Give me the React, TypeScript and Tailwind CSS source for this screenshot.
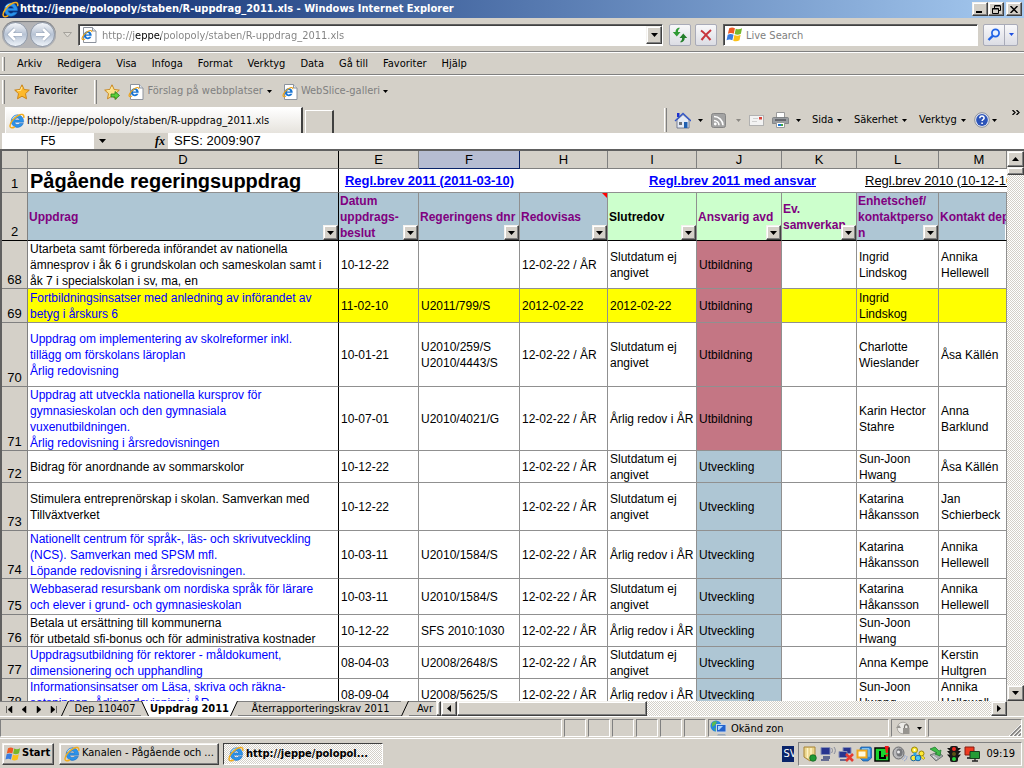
import React from "react";

const BEVEL =
  "border border-t-[#f4f2ee] border-l-[#f4f2ee] border-r-[#404040] border-b-[#404040] bg-[#d4d0c8] shadow-[inset_-1px_-1px_0_#808080,inset_1px_1px_0_#ffffff]";
const SUNKEN = "border border-t-[#808080] border-l-[#808080] border-r-white border-b-white";
const DITHER = "bg-[repeating-conic-gradient(#ffffff_0_25%,#d4d0c8_0_50%)] bg-[length:2px_2px]";

function IeIcon({ size = 16 }: { size?: number }) {
  return (
    <svg width={size} height={size} viewBox="0 0 16 16" aria-hidden="true" className="shrink-0">
      <path
        d="M8.300 1.800a6.300 6.300 0 1 0 6 8.700h-3.600a2.900 2.900 0 0 1-5.100-1.300h9c.3-4.200-2.500-7.400-6.300-7.400zM5.800 6.900a2.600 2.600 0 0 1 5 0z"
        fill="#2b93ea"
        stroke="#1463bb"
        strokeWidth=".5"
      />
      <path d="M3.600 6C4.600 3.900 6.500 2.900 8.500 2.900" fill="none" stroke="#a5dcff" strokeWidth="1.300" />
      <path
        d="M14.800 4.300C15.300 1 12.600.600 9 2.600 4.600 5 .8 10.200 1 13.200c.2 2 2.400 1.900 4.400.8"
        fill="none"
        stroke="#f2ac1c"
        strokeWidth="1.500"
        strokeLinecap="round"
      />
    </svg>
  );
}

function IePage() {
  return (
    <svg width="16" height="16" viewBox="0 0 16 16" aria-hidden="true" className="shrink-0">
      <path d="M2.500.500h9l3.500 3.500v11.500H2.500z" fill="#fff" stroke="#8c929c" />
      <path d="M11.500.500V4H15" fill="#dfe6ee" stroke="#8c929c" />
      <path d="M6.700 4.200a4 4 0 1 0 3.800 5.600H8.200a1.800 1.800 0 0 1-3.200-1h5.700c.2-2.700-1.500-4.600-4-4.600zM5 7.400a1.700 1.700 0 0 1 3.300 0z" fill="#1773d2" />
      <path d="M10.800 5.200c.3-2-1.500-2.200-4-.8C3.800 6.200.9 9.800 1 11.700c.2 1.300 1.600 1.100 3 .3" fill="none" stroke="#eda41a" strokeWidth="1.200" />
    </svg>
  );
}

function Flag({ size = 16 }: { size?: number }) {
  return (
    <svg width={size} height={size} viewBox="0 0 16 16" aria-hidden="true" className="shrink-0">
      <path d="M3 2.200c2-1 3.600-1 5.400 0L7.300 7.400c-1.900-1-3.500-1-5.500 0z" fill="#ee5a24" />
      <path d="M9.200 2.500c1.900.9 3.700.9 5.900-.3L14 7.300c-2.100 1.100-3.900 1.200-5.900.3z" fill="#76b82a" />
      <path d="M1.600 8.300c2-1 3.600-1 5.500 0L6 13.500c-1.900-1-3.600-1-5.500 0z" fill="#3a7de0" />
      <path d="M7.900 8.500c1.900.9 3.800.9 5.900-.3l-1.100 5.300c-2.100 1.100-4 1.200-5.900.3z" fill="#fbc117" />
    </svg>
  );
}

function Star({ add = false }: { add?: boolean }) {
  return (
    <svg width="16" height="16" viewBox="0 0 16 16" aria-hidden="true" className="shrink-0">
      <path
        d="M8 .8l2.200 4.700 5.100.6-3.800 3.500 1 5.200L8 12.200l-4.500 2.600 1-5.200L.7 6.100l5.100-.6z"
        fill={add ? "#fbe08a" : "#fdb92b"}
        stroke="#c77f10"
        strokeWidth=".9"
        strokeLinejoin="round"
      />
      <path d="M8 3l-1.400 3.300-3.400.500" fill="none" stroke="#ffe79a" strokeWidth="1.100" />
      {add && <path d="M7 10h4V7.500l4.500 4-4.500 4V13H7z" fill="#5cd03a" stroke="#237a16" strokeWidth=".8" />}
    </svg>
  );
}

function Caret({ className = "text-black" }: { className?: string }) {
  return (
    <svg width="5" height="3" viewBox="0 0 5 3" aria-hidden="true" className={`shrink-0 ${className}`}>
      <path d="M0 0h5L2.500 3z" fill="currentColor" />
    </svg>
  );
}

function Grip() {
  return <span className="h-6 w-[3px] shrink-0 border-l border-l-white border-r border-r-[#808080]" />;
}

function TitleBar() {
  return (
    <header className="flex h-[18px] shrink-0 items-center bg-linear-to-r from-[#0a246a] to-[#a6caf0] pl-[2px] pr-[2px]">
      <IeIcon size={17} />
      <h1 className="ml-[1px] flex-1 truncate text-[11px] font-bold leading-4 text-white">
        http://jeppe/polopoly/staben/R-uppdrag_2011.xls - Windows Internet Explorer
      </h1>
      <button aria-label="Minimera" className={`flex h-[14px] w-4 items-end justify-center pb-[2px] ${BEVEL}`}>
        <span className="mr-[2px] h-[2px] w-[6px] bg-black" />
      </button>
      <button aria-label="Återställ" className={`flex h-[14px] w-4 items-center justify-center ${BEVEL}`}>
        <svg width="9" height="9" viewBox="0 0 9 9">
          <path d="M2.500 3V1h6v4.500H6.500M2.500.500h6M.500 3.500h6v5h-6zM.500 4h6" fill="none" stroke="#000" />
        </svg>
      </button>
      <button aria-label="Stäng" className={`ml-[2px] flex h-[14px] w-4 items-center justify-center ${BEVEL}`}>
        <svg width="8" height="7" viewBox="0 0 8 7">
          <path d="M.500 0l7 7M7.500 0l-7 7" stroke="#000" strokeWidth="1.500" />
        </svg>
      </button>
    </header>
  );
}

function NavBar() {
  return (
    <div className="flex h-[34px] shrink-0 items-center border-b border-b-[#808080] pl-[2px] pr-[6px]">
      <div className="flex items-center gap-[2px] rounded-full bg-[#b4b4b6] p-[1px] shadow-[inset_0_1px_1px_#77797d]">
        {["Bakåt", "Framåt"].map((label, i) => (
          <button
            key={label}
            aria-label={label}
            className="flex size-[25px] items-center justify-center rounded-full border border-[#8f99a8] bg-linear-to-b from-[#f4f6fa] via-[#b7c3d4] to-[#eef3f9]"
          >
            <svg width="17" height="15" viewBox="0 0 17 15">
              <path
                d={i === 0 ? "M8 2L2.500 7.500 8 13M3 7.500h12" : "M9 2l5.500 5.500L9 13M14 7.500H2"}
                fill="none"
                stroke="#98a6ba"
                strokeWidth="4"
              />
              <path
                d={i === 0 ? "M8 2L2.500 7.500 8 13M3 7.500h12" : "M9 2l5.500 5.500L9 13M14 7.500H2"}
                fill="none"
                stroke="#fff"
                strokeWidth="2.800"
              />
            </svg>
          </button>
        ))}
      </div>
      <button aria-label="Senaste sidor" className="flex w-[22px] items-center justify-center">
        <svg width="9" height="6" viewBox="0 0 9 6">
          <path d="M.500.500h8l-4 4.500z" fill="#dedbd4" stroke="#a5a29c" />
        </svg>
      </button>
      <div className="flex h-[22px] flex-1 items-center border border-t-[#606060] border-l-[#606060] border-r-white border-b-white bg-white pl-[2px] shadow-[inset_1px_1px_0_#404040]">
        <IePage />
        <input
          aria-label="Adress"
          defaultValue="http://jeppe/polopoly/staben/R-uppdrag_2011.xls"
          className="ml-[5px] h-[18px] min-w-0 flex-1 bg-[linear-gradient(90deg,#808080_32px,#000000_32px,#000000_59px,#808080_59px)] bg-clip-text pt-[2px] text-[11px] leading-4 text-transparent outline-none"
        />
        <button aria-label="Visa adresser" className={`flex h-[18px] w-4 items-center justify-center ${BEVEL}`}>
          <svg width="7" height="4" viewBox="0 0 7 4">
            <path d="M0 0h7L3.500 4z" />
          </svg>
        </button>
      </div>
      <button
        aria-label="Uppdatera"
        className="ml-[6px] flex size-[22px] items-center justify-center rounded-[2px] border border-[#a9abb8] bg-linear-to-b from-[#f8f8fa] to-[#dcdde4]"
      >
        <svg width="16" height="16" viewBox="0 0 16 16">
          <path d="M7.500.500C5 .8 3.500 2.500 3.500 5H.800l4 4.500L8.500 5H6c0-1.700.4-2.600 1.500-3.200z" fill="#2f9a35" />
          <path d="M8.500 15.500c2.700-.3 4.200-2 4.200-4.500h2.500l-3.900-4.500L7.500 11h2.600c0 1.700-.5 2.600-1.600 3.200z" fill="#237f2a" />
        </svg>
      </button>
      <button
        aria-label="Stoppa"
        className="ml-1 flex size-[22px] items-center justify-center rounded-[2px] border border-[#a9abb8] bg-linear-to-b from-[#f8f8fa] to-[#dcdde4]"
      >
        <svg width="12" height="12" viewBox="0 0 12 12">
          <path d="M1 1.500c3 2 6 5.500 9.500 9.500M11 1C7.500 4 4.500 7 1.500 11" fill="none" stroke="#c8343c" strokeWidth="2.100" />
        </svg>
      </button>
      <div className="ml-[6px] flex h-[22px] w-[255px] items-center border border-t-[#606060] border-l-[#606060] border-r-white border-b-white bg-white pl-[2px] shadow-[inset_1px_1px_0_#404040]">
        <Flag size={17} />
        <input
          aria-label="Sök"
          placeholder="Live Search"
          className="ml-[3px] h-[18px] min-w-0 flex-1 pt-[2px] text-[11px] leading-4 outline-none placeholder:text-[#808080]"
        />
      </div>
      <div className="ml-[5px] flex h-[22px] rounded-[2px] border border-[#a9abb8] bg-linear-to-b from-[#f8f8fa] to-[#dcdde4]">
        <button aria-label="Sök på webben" className="flex w-[21px] items-center justify-center border-r border-[#a9abb8]">
          <svg width="14" height="14" viewBox="0 0 14 14">
            <circle cx="8.500" cy="5" r="3.600" fill="#e6f0ff" stroke="#1f62e6" strokeWidth="1.700" />
            <path d="M5.700 7.800L1.500 12" stroke="#1f62e6" strokeWidth="2.400" />
          </svg>
        </button>
        <button aria-label="Sökalternativ" className="flex w-3 items-center justify-center">
          <Caret className="text-[#1f4fe0]" />
        </button>
      </div>
    </div>
  );
}

function MenuBar() {
  const items = ["Arkiv", "Redigera", "Visa", "Infoga", "Format", "Verktyg", "Data", "Gå till", "Favoriter", "Hjälp"];
  return (
    <nav className="flex h-[23px] shrink-0 items-center border-t border-b border-t-white border-b-[#808080] pl-[2px]">
      <span className="h-[14px] w-[3px] border-l border-l-white border-r border-r-[#808080]" />
      <div className="ml-3 flex gap-[15px] pt-[1px]">
        {items.map((t) => (
          <button key={t} className="text-[11px] leading-4">
            {t}
          </button>
        ))}
      </div>
    </nav>
  );
}

function FavoritesBar() {
  return (
    <div className="flex h-8 shrink-0 items-center border-t border-t-white pl-[2px] text-[11px]">
      <Grip />
      <button className="ml-[9px] flex items-center gap-1">
        <Star />
        Favoriter
      </button>
      <span className="w-[16px]" />
      <Grip />
      <button aria-label="Lägg till i Favoriter" className="ml-[7px]">
        <Star add />
      </button>
      <button className="ml-2 flex items-center gap-1 text-[#808080]">
        <IePage />
        Förslag på webbplatser
        <Caret className="text-black" />
      </button>
      <button className="ml-[10px] flex items-center gap-[3px] text-[#808080]">
        <IePage />
        WebSlice-galleri
        <Caret className="text-black" />
      </button>
    </div>
  );
}

function TabRow() {
  return (
    <div className="flex h-[26px] shrink-0 items-end text-[11px]">
      <button className="ml-[5px] flex h-[26px] w-[298px] items-center border-t border-l border-t-white border-l-white border-r-2 border-r-[#404040] bg-linear-to-b from-white to-[#e6e3dd] pl-[3px]">
        <IeIcon />
        <span className="ml-[2px] pt-[2px]">http://jeppe/polopoly/staben/R-uppdrag_2011.xls</span>
      </button>
      <button
        aria-label="Ny flik"
        className="ml-[2px] h-[23px] w-[29px] border-t border-l border-t-white border-l-white border-r-2 border-r-[#404040]"
      />
      <div className="ml-auto flex h-[26px] items-center">
        <Grip />
        <button aria-label="Startsida" className="ml-[7px] flex w-[37px] items-center justify-between pr-2">
          <svg width="17" height="17" viewBox="0 0 17 17">
            <path d="M3 1h2.500v4H3z" fill="#1c2fd0" />
            <path d="M3 8l6-5.500L15 8v8H3z" fill="#e4eaf5" stroke="#5b6680" strokeWidth=".8" />
            <path d="M1 9l8-7.500L17 9" fill="none" stroke="#3558c8" strokeWidth="1.400" />
            <path d="M10 10h3.500v6H10z" fill="#1f5fb0" />
            <path d="M5 10h3v3H5z" fill="#6b7079" />
          </svg>
          <Caret />
        </button>
        <button aria-label="Flöden" className="flex w-[38px] items-center justify-between pr-2">
          <svg width="15" height="15" viewBox="0 0 15 15">
            <rect x=".500" y=".500" width="14" height="14" rx="2" fill="#a3a3a3" stroke="#858585" />
            <path d="M3 7.500a5 5 0 0 1 5 4.800M3 3.500a9 9 0 0 1 9 8.800" fill="none" stroke="#fff" strokeWidth="1.600" />
            <circle cx="4.300" cy="11" r="1.400" fill="#fff" />
          </svg>
          <Caret className="text-[#8c8984]" />
        </button>
        <button aria-label="Läs e-post" className="w-[23px]">
          <svg width="15" height="11" viewBox="0 0 15 11">
            <rect x=".500" y=".500" width="14" height="10" fill="#f3f3f3" stroke="#b1b1b1" />
            <path d="M10 2h3v2.500h-3z" fill="#d8433a" />
            <path d="M4 3.500h5M3 6.500h5" stroke="#d0d0d0" />
          </svg>
        </button>
        <button aria-label="Skriv ut" className="flex w-10 items-center justify-between pr-[11px]">
          <svg width="17" height="16" viewBox="0 0 17 16">
            <path d="M4.500.500h8V6h-8z" fill="#fff" stroke="#9a9a9a" />
            <path d="M1.500 5.500h14q1 0 1 1v5h-16v-5q0-1 1-1z" fill="#9b9ea2" stroke="#6f7276" strokeWidth=".7" />
            <path d="M3 8h11" stroke="#55575c" strokeWidth="1.500" />
            <path d="M4.500 10.500h8v5h-8z" fill="#fff" stroke="#9a9a9a" />
            <path d="M6 12h3v2H6z" fill="#1b73d1" />
            <path d="M9 12h2v2H9z" fill="#3da843" />
          </svg>
          <Caret />
        </button>
        <button className="flex w-[42px] items-center gap-1">
          Sida <Caret />
        </button>
        <button className="flex w-[65px] items-center gap-1">
          Säkerhet <Caret />
        </button>
        <button className="flex w-[55px] items-center gap-1">
          Verktyg <Caret />
        </button>
        <button aria-label="Hjälp" className="flex items-center gap-[2px]">
          <svg width="16" height="16" viewBox="0 0 16 16">
            <circle cx="8" cy="8" r="7.300" fill="#e9edf5" stroke="#8a8f9b" />
            <circle cx="8" cy="8" r="5.900" fill="#2b53b8" />
            <path d="M5.800 6.300c.1-3 4.500-2.800 4.300-.2-.1 1.400-2 1.400-2 3" fill="none" stroke="#fff" strokeWidth="1.500" />
            <path d="M7.300 10.500h1.600V12H7.300z" fill="#fff" />
          </svg>
          <Caret />
        </button>
        <button aria-label="Fler kommandon" className="ml-[15px] mr-1 mb-4">
          <svg width="8" height="5" viewBox="0 0 8 5">
            <path d="M.500 0L3 2.500.500 5M4.500 0L7 2.500 4.500 5" fill="none" stroke="#000" strokeWidth="1.300" />
          </svg>
        </button>
      </div>
    </div>
  );
}

function FormulaBar() {
  return (
    <div className="flex h-4 shrink-0 items-stretch font-['Liberation_Sans',Arial,sans-serif] text-[13px] leading-4">
      <input aria-label="Namnruta" defaultValue="F5" className="ml-[2px] h-4 w-[92px] bg-white text-center outline-none" />
      <button aria-label="Visa namn" className="flex w-[17px] items-center justify-center">
        <svg width="7" height="4" viewBox="0 0 7 4">
          <path d="M0 0h7L3.500 4z" />
        </svg>
      </button>
      <button
        aria-label="Infoga funktion"
        className="ml-[41px] w-4 text-center font-['Liberation_Serif',serif] text-[12px] font-bold italic leading-4"
      >
        fx
      </button>
      <input
        aria-label="Formel"
        defaultValue="SFS: 2009:907"
        className="h-4 min-w-0 flex-1 bg-white pl-[6px] outline-none"
      />
    </div>
  );
}

function FilterButton({ column }: { column: string }) {
  return (
    <button
      aria-label={`Filtrera ${column}`}
      className={`absolute right-0 bottom-0 flex h-[15px] w-[15px] items-center justify-center ${BEVEL}`}
    >
      <svg width="7" height="4" viewBox="0 0 7 4">
        <path d="M0 0h7L3.500 4z" />
      </svg>
    </button>
  );
}

const BLUE_HEAD = "bg-[#aec6d4] text-[#800080]";
const GREEN_HEAD = "bg-[#ccffcc]";

const FIELDS = [
  { id: "D", text: "Uppdrag", tone: BLUE_HEAD },
  { id: "E", text: "Datum\nuppdrags-\nbeslut", tone: BLUE_HEAD },
  { id: "F", text: "Regeringens dnr", tone: BLUE_HEAD },
  { id: "H", text: "Redovisas", tone: BLUE_HEAD },
  { id: "I", text: "Slutredov", tone: `${GREEN_HEAD} text-black` },
  { id: "J", text: "Ansvarig avd", tone: `${GREEN_HEAD} text-[#800080]` },
  { id: "K", text: "Ev.\nsamverkan", tone: `${GREEN_HEAD} text-[#800080]` },
  { id: "L", text: "Enhetschef/\nkontaktperso\nn", tone: BLUE_HEAD },
  { id: "M", text: "Kontakt dep", tone: BLUE_HEAD },
];

type Row = {
  n: number;
  h: string;
  cells: string[];
  blue?: boolean;
  yellow?: boolean;
};

const AR = "12-02-22 / ÅR";
const OPEN = "Slutdatum ej\nangivet";
const YEARLY = "Årlig redov i ÅR";

const ROWS: Row[] = [
  { n: 68, h: "h-[47px]", cells: ["Utarbeta samt förbereda införandet av nationella\nämnesprov i åk 6 i grundskolan och sameskolan samt i\nåk 7 i specialskolan i sv, ma, en", "10-12-22", "", AR, OPEN, "Utbildning", "", "Ingrid\nLindskog", "Annika\nHellewell"] },
  { n: 69, h: "h-[33px]", blue: true, yellow: true, cells: ["Fortbildningsinsatser med anledning av införandet av\nbetyg i årskurs 6", "11-02-10", "U2011/799/S", "2012-02-22", "2012-02-22", "Utbildning", "", "Ingrid\nLindskog", ""] },
  { n: 70, h: "h-[63px]", blue: true, cells: ["Uppdrag om implementering av skolreformer inkl.\ntillägg om förskolans läroplan\nÅrlig redovisning", "10-01-21", "U2010/259/S\nU2010/4443/S", AR, OPEN, "Utbildning", "", "Charlotte\nWieslander", "Åsa Källén"] },
  { n: 71, h: "h-[63px]", blue: true, cells: ["Uppdrag att utveckla nationella kursprov för\ngymnasieskolan och den gymnasiala\nvuxenutbildningen.\nÅrlig redovisning i årsredovisningen", "10-07-01", "U2010/4021/G", AR, YEARLY, "Utbildning", "", "Karin Hector\nStahre", "Anna\nBarklund"] },
  { n: 72, h: "h-[31px]", cells: ["Bidrag för anordnande av sommarskolor", "10-12-22", "", AR, OPEN, "Utveckling", "", "Sun-Joon\nHwang", "Åsa Källén"] },
  { n: 73, h: "h-[47px]", cells: ["Stimulera entreprenörskap i skolan. Samverkan med\nTillväxtverket", "10-12-22", "", AR, OPEN, "Utveckling", "", "Katarina\nHåkansson", "Jan\nSchierbeck"] },
  { n: 74, h: "h-[47px]", blue: true, cells: ["Nationellt centrum för språk-, läs- och skrivutveckling\n(NCS). Samverkan med SPSM mfl.\nLöpande redovisning i årsredovisningen.", "10-03-11", "U2010/1584/S", AR, YEARLY, "Utveckling", "", "Katarina\nHåkansson", "Annika\nHellewell"] },
  { n: 75, h: "h-[35px]", blue: true, cells: ["Webbaserad resursbank om nordiska språk för lärare\noch elever i grund- och gymnasieskolan", "10-03-11", "U2010/1584/S", AR, OPEN, "Utveckling", "", "Katarina\nHåkansson", "Annika\nHellewell"] },
  { n: 76, h: "h-[31px]", cells: ["Betala ut ersättning till kommunerna\nför utbetald sfi-bonus och för administrativa kostnader", "10-12-22", "SFS 2010:1030", AR, YEARLY, "Utveckling", "", "Sun-Joon\nHwang", ""] },
  { n: 77, h: "h-[31px]", blue: true, cells: ["Uppdragsutbildning för rektorer - måldokument,\ndimensionering och upphandling", "08-04-03", "U2008/2648/S", AR, OPEN, "Utveckling", "", "Anna Kempe", "Kerstin\nHultgren"] },
  { n: 78, h: "h-[31px]", blue: true, cells: ["Informationsinsatser om Läsa, skriva och räkna-\nsatsningen. Årlig redovisning i ÅR.", "08-09-04", "U2008/5625/S", AR, YEARLY, "Utveckling", "", "Sun-Joon\nHwang", "Annika\nHellewell"] },
];

function cellTone(row: Row, i: number) {
  if (i === 5) return row.cells[5] === "Utbildning" ? "bg-[#c47684]" : "bg-[#aec6d4]";
  return row.yellow ? "bg-[#ffff00]" : "bg-white";
}

const LINE = "border-r border-b border-[#909090]";
const HEAD = "border-r border-b border-[#808080] bg-[#d4d0c8] p-0 text-[13px] font-normal";

function Sheet() {
  return (
    <div className="min-w-0 flex-1 overflow-hidden">
      <table className="w-full table-fixed border-separate border-spacing-0 font-['Liberation_Sans',Arial,sans-serif] text-[12px] leading-4">
        <colgroup>
          <col className="w-[26px]" />
          <col className="w-[311px]" />
          <col className="w-[80px]" />
          <col className="w-[101px]" />
          <col className="w-[88px]" />
          <col className="w-[89px]" />
          <col className="w-[85px]" />
          <col className="w-[75px]" />
          <col className="w-[82px]" />
          <col />
        </colgroup>
        <thead>
          <tr>
            <th className={HEAD} aria-label="Markera allt" />
            {FIELDS.map((f) => (
              <th
                key={f.id}
                className={`${HEAD} ${f.id === "F" ? "border-r-[#0a246a]! border-b-[#0a246a]! bg-[#b6bdd2]!" : ""} ${f.id === "D" ? "border-r-black!" : ""}`}
              >
                <div className={`h-[17px] leading-[18px] ${f.id === "M" ? "pl-[13px]" : ""}`}>{f.id}</div>
              </th>
            ))}
          </tr>
        </thead>
        <tbody>
          <tr>
            <th className={`${HEAD} align-bottom`}>1</th>
            <td className="border-r border-b border-r-black border-b-[#909090] bg-white p-0 pl-[2px]">
              <div className="flex h-[23px] items-center whitespace-nowrap text-[20px] font-bold">Pågående regeringsuppdrag</div>
            </td>
            <td colSpan={2} className="border-b border-[#909090] bg-white p-0 text-center text-[13px] font-bold">
              <a href="#2011" className="text-[#0000ff] underline">
                Regl.brev 2011 (2011-03-10)
              </a>
            </td>
            <td className="border-b border-[#909090] bg-white p-0" />
            <td colSpan={3} className="border-b border-[#909090] bg-white p-0 text-center text-[13px] font-bold">
              <a href="#ansvar" className="text-[#0000ff] underline">
                Regl.brev 2011 med ansvar
              </a>
            </td>
            <td colSpan={2} className="overflow-hidden border-b border-[#909090] bg-white p-0 pl-2 text-[13px] whitespace-nowrap">
              <a href="#2010" className="underline">
                Regl.brev 2010 (10-12-16)
              </a>
            </td>
          </tr>
          <tr>
            <th className={`${HEAD} border-b-black! align-bottom`}>2</th>
            {FIELDS.map((f) => (
              <td
                key={f.id}
                className={`border-r border-b border-b-black p-0 font-bold ${f.id === "D" ? "border-r-black" : "border-r-[#909090]"} ${f.tone}`}
              >
                <div className="relative flex h-[47px] items-center overflow-hidden pl-[1px] whitespace-pre">
                  {f.text}
                  {f.id !== "M" && <FilterButton column={f.id} />}
                  {f.id === "M" && <span className="absolute right-0 bottom-0 h-[15px] w-px bg-white" />}
                  {f.id === "H" && (
                    <svg width="5" height="5" viewBox="0 0 5 5" className="absolute top-0 right-0">
                      <path d="M0 0h5v5z" fill="#f00" />
                    </svg>
                  )}
                </div>
              </td>
            ))}
          </tr>
          {ROWS.map((row) => (
            <tr key={row.n}>
              <th className={`${HEAD} align-bottom`}>{row.n}</th>
              {row.cells.map((text, i) => (
                <td
                  key={i}
                  className={`${LINE} p-0 ${i === 0 ? "border-r-black!" : ""} ${cellTone(row, i)} ${row.blue && i === 0 ? "text-[#0000ff]" : "text-black"}`}
                >
                  <div className={`flex items-center overflow-hidden pl-[2px] whitespace-pre ${row.h}`}>{text}</div>
                </td>
              ))}
            </tr>
          ))}
        </tbody>
      </table>
    </div>
  );
}

function VerticalScroll() {
  return (
    <div className={`flex w-[17px] shrink-0 flex-col ${DITHER}`}>
      <button aria-label="Rulla upp" className={`flex h-4 items-center justify-center ${BEVEL}`}>
        <svg width="7" height="4" viewBox="0 0 7 4">
          <path d="M0 4h7L3.500 0z" />
        </svg>
      </button>
      <span className={`h-2 ${BEVEL}`} />
      <button aria-label="Rulla ned" className={`mt-auto flex h-4 items-center justify-center ${BEVEL}`}>
        <svg width="7" height="4" viewBox="0 0 7 4">
          <path d="M0 0h7L3.500 4z" />
        </svg>
      </button>
    </div>
  );
}

function Slant({ back = false, left, right }: { back?: boolean; left: string; right: string }) {
  const d = back ? "M.500 0l7 15" : "M7.500 0L.500 15";
  return (
    <svg width="8" height="15" viewBox="0 0 8 15" className="shrink-0" aria-hidden="true">
      <path d={back ? "M0 0h.500l7 15H0z" : "M0 0h7.500l-7 15H0z"} fill={left} />
      <path d={back ? "M8 0H.500l7 15H8z" : "M8 0h-.500l-7 15H8z"} fill={right} />
      <path d={d} stroke="#000" fill="none" />
    </svg>
  );
}

function SheetTabs() {
  const arrows = [
    { label: "Första bladet", d: "M1.500 0v7M7 0v7L3 3.500z" },
    { label: "Föregående blad", d: "M6 0v7L2 3.500z" },
    { label: "Nästa blad", d: "M2 0v7l4-3.500z" },
    { label: "Sista bladet", d: "M1 0v7l4-3.500zM6.500 0v7" },
  ];
  const gray = "#d4d0c8";
  const idle = "overflow-hidden border-t border-b border-[#808080] leading-[13px]";
  return (
    <div className="flex h-[15px] shrink-0 items-stretch text-[11px] leading-[15px]">
      <div className="flex border-t border-[#808080] pl-[1px]">
        {arrows.map((a) => (
          <button key={a.label} aria-label={a.label} className="flex w-[15px] items-center justify-center">
            <svg width="8" height="7" viewBox="0 0 8 7">
              <path d={a.d} fill="#000" stroke="#000" strokeWidth=".5" />
            </svg>
          </button>
        ))}
      </div>
      <Slant left={gray} right={gray} />
      <button className={`w-[72px] ${idle}`}>Dep 110407</button>
      <Slant back left={gray} right="#fff" />
      <button className="flex w-[81px] justify-center bg-white font-bold whitespace-nowrap">Uppdrag 2011</button>
      <Slant left="#fff" right={gray} />
      <button className={`w-[163px] pl-[2px] ${idle}`}>Återrapporteringskrav 2011</button>
      <Slant left={gray} right={gray} />
      <button className={`w-[27px] pl-2 text-left ${idle}`}>Avr</button>
      <span className={`w-[5px] ${BEVEL}`} />
      <button aria-label="Rulla åt vänster" className={`flex w-4 items-center justify-center ${BEVEL}`}>
        <svg width="4" height="7" viewBox="0 0 4 7">
          <path d="M4 0v7L0 3.500z" />
        </svg>
      </button>
      <div className={`flex flex-1 ${DITHER}`}>
        <span className={`w-[190px] ${BEVEL}`} />
      </div>
      <button aria-label="Rulla åt höger" className={`flex w-4 items-center justify-center ${BEVEL}`}>
        <svg width="4" height="7" viewBox="0 0 4 7">
          <path d="M0 0v7l4-3.500z" />
        </svg>
      </button>
      <span className="w-[17px]" />
    </div>
  );
}

function StatusBar() {
  return (
    <footer className="flex h-[22px] shrink-0 items-end gap-[2px] border-t border-t-white pr-[2px] pb-[1px] text-[11px]">
      <span className={`h-[18px] flex-1 ${SUNKEN}`} />
      {[0, 1, 2, 3, 4, 5].map((i) => (
        <span key={i} className={`h-[18px] w-[22px] ${SUNKEN}`} />
      ))}
      <span className={`flex h-[18px] w-[181px] items-center gap-1 pl-[1px] ${SUNKEN}`}>
        <svg width="17" height="16" viewBox="0 0 17 16" aria-hidden="true">
          <circle cx="6" cy="6" r="5.500" fill="#2487dc" />
          <path d="M2 3c2-2 4-2 5-1L5 5 2 7zM4 8l3 1-1 2.500z" fill="#5dbb4c" />
          <rect x="6.500" y="4.500" width="9.500" height="7.500" fill="#2463cd" stroke="#c8d4e4" />
          <path d="M8 14h7l1 1.500H7z" fill="#9ba9bb" />
          <path d="M8 6h5l-4 4H8z" fill="#a9d5ff" />
        </svg>
        <span className="pt-[2px] leading-4">Okänd zon</span>
      </span>
      <button aria-label="Skyddat läge" className={`flex h-[18px] w-[35px] items-center justify-center gap-[6px] ${SUNKEN}`}>
        <svg width="16" height="14" viewBox="0 0 16 14">
          <circle cx="8" cy="7" r="5.800" fill="#eceae6" stroke="#aaa7a1" />
          <path d="M1 7l3-3 2 3z" fill="#969490" />
          <rect x="8" y="7" width="6.500" height="6" fill="#97948f" />
          <path d="M9.500 7V5.500a1.800 1.800 0 0 1 3.600 0V7" fill="none" stroke="#77746f" strokeWidth="1.200" />
        </svg>
        <Caret />
      </button>
      <span className={`flex h-[18px] w-[94px] items-end justify-end ${SUNKEN}`}>
        <svg width="12" height="12" viewBox="0 0 12 12" aria-hidden="true">
          <path d="M0 12L12 0M4 12l8-8M8 12l4-4" stroke="#fff" />
          <path d="M1.500 12L12 1.500M5.500 12L12 5.500M9.500 12L12 9.500" stroke="#808080" strokeWidth="1.500" />
        </svg>
      </span>
    </footer>
  );
}

const TRAY: { label: string; art: React.ReactNode }[] = [
  {
    label: "Säkerhetskort",
    art: (
      <>
        <path d="M2 1h11v10l-5 4-6-4z" fill="#ead58c" stroke="#a88434" />
        <path d="M5.500 2v10M9 2v6" stroke="#fff3c4" strokeWidth="1.500" />
        <circle cx="11" cy="12" r="3.300" fill="#1f9a34" stroke="#0d5c1b" strokeWidth=".7" />
      </>
    ),
  },
  {
    label: "Nätverk",
    art: (
      <>
        <path d="M1 1.500h9v7H1z" fill="#27348f" stroke="#8790b7" />
        <path d="M3 10h7v3H3z" fill="#5d6790" />
        <path d="M1 14h8" stroke="#3f4a80" strokeWidth="1.500" />
        <path d="M11.500 2c1.300 1.500 1.300 3.500 0 5M14 1c1.800 2.500 1.800 4.500 0 7" fill="none" stroke="#85899a" />
      </>
    ),
  },
  {
    label: "Frånkopplat nätverk",
    art: (
      <>
        <path d="M5 1.500h8v6H5z" fill="#27348f" stroke="#8790b7" />
        <path d="M1 5.500h8v6H1z" fill="#27348f" stroke="#8790b7" />
        <path d="M2 14h6" stroke="#3f4a80" strokeWidth="1.500" />
        <path d="M8 8l7 7M15 8l-7 7" stroke="#e43a31" strokeWidth="2.600" />
      </>
    ),
  },
  {
    label: "Arkiv",
    art: (
      <>
        <path d="M5 1h9q1.500 0 1.500 2v9L12 15H7l-3-3V3z" fill="#2d85d8" stroke="#15539a" strokeWidth=".7" />
        <path d="M1.500 4.500h9v7h-9z" fill="#fff9dc" stroke="#f0a81c" strokeWidth="2" />
        <path d="M6 2.800h7v8" fill="none" stroke="#a6dbff" />
      </>
    ),
  },
  {
    label: "Logg",
    art: (
      <>
        <path d="M1 2h14v13H1z" fill="#18d52e" stroke="#000" strokeWidth="1.500" />
        <path d="M6 5v7h5V9" fill="none" stroke="#000" strokeWidth="2" />
        <path d="M10.800 0h4L13.700 7h-1.800zM11.600 8.300h2.300v2.300h-2.300z" fill="#f01414" />
      </>
    ),
  },
  {
    label: "Volym",
    art: (
      <>
        <ellipse cx="6.500" cy="7" rx="5.500" ry="6" fill="#b9b9bb" stroke="#67686b" />
        <ellipse cx="7.500" cy="6.500" rx="3.200" ry="4" fill="#77787c" />
        <circle cx="6.500" cy="6" r="1.500" fill="#ececee" />
        <path d="M13 9c0 2-1 3.500-3 4.500M15 10c0 2.500-1 4-3 5" fill="none" stroke="#97a8d0" />
      </>
    ),
  },
  {
    label: "Nycklar",
    art: (
      <>
        <circle cx="4.500" cy="4" r="3" fill="#ffe936" stroke="#9c8600" />
        <circle cx="11.500" cy="7.500" r="2.500" fill="#ffe936" stroke="#9c8600" />
        <path d="M12 9.500l3 2.500-1.500 1.500-3-2.500z" fill="#ffe936" stroke="#9c8600" strokeWidth=".6" />
        <circle cx="3.500" cy="12" r="2.800" fill="#ffe936" stroke="#1363a3" />
        <circle cx="8" cy="12" r="2.800" fill="#49c6f5" stroke="#1363a3" />
        <path d="M3.500 6.500h3v3h-3z" fill="#29a7e8" />
        <circle cx="4.500" cy="4" r="1" fill="#fff" />
      </>
    ),
  },
  {
    label: "Säker borttagning",
    art: (
      <>
        <path d="M2 9l8-3 5 4-7 5z" fill="#a7abad" stroke="#5f6466" strokeWidth=".8" />
        <path d="M2 3l5-2 4 4 2-1-1 6-5-2 2-1z" fill="#3dbb46" stroke="#1a752a" strokeWidth=".7" />
        <path d="M5 10l4 3" stroke="#e9ecee" />
      </>
    ),
  },
  {
    label: "Trafikljus",
    art: (
      <>
        <path d="M1 2h14l-3 3h3l-3 3.500h3L12 12H4L1 8.500h3L1 5h3z" fill="#111" />
        <rect x="4" y="0" width="8" height="16" rx="2" fill="#181818" />
        <circle cx="8" cy="3" r="2" fill="#ee2a20" />
        <circle cx="8" cy="8" r="2" fill="#5b5316" />
        <circle cx="8" cy="13" r="2" fill="#24d33b" />
      </>
    ),
  },
  {
    label: "Skärmar",
    art: (
      <>
        <path d="M1 1h9v8H1z" fill="#ef3a20" stroke="#861d10" />
        <path d="M3 11h4v2H3z" fill="#444" />
        <path d="M6 5.500h9.500v7H6z" fill="#259b36" stroke="#173f1e" />
        <path d="M8 15h6M11 12.500V15" stroke="#222" strokeWidth="1.300" />
      </>
    ),
  },
];

function TaskBar() {
  return (
    <div className="flex h-[30px] shrink-0 items-center border-t border-t-white pr-[2px] pl-[2px] text-[11px]">
      <button className={`flex h-[22px] w-[52px] items-center gap-[1px] pl-[2px] font-bold ${BEVEL}`}>
        <Flag size={16} />
        Start
      </button>
      <button className={`ml-[5px] flex h-[22px] w-40 items-center gap-[2px] pl-1 ${BEVEL}`}>
        <IeIcon />
        Kanalen - Pågående och ...
      </button>
      <button
        className={`ml-1 flex h-[22px] w-40 items-center gap-[2px] border border-t-[#404040] border-l-[#404040] border-r-white border-b-white pl-1 font-bold ${DITHER}`}
      >
        <IeIcon />
        <span className="pt-[2px]">http://jeppe/polopol...</span>
      </button>
      <button aria-label="Språk: SV" className="ml-auto h-4 w-3 overflow-hidden bg-[#0a246a] pl-[1px] text-left text-white">
        SV
      </button>
      <div className={`ml-1 flex h-6 items-center gap-[2px] pr-[6px] pl-[3px] ${SUNKEN}`}>
        {TRAY.map((t) => (
          <svg key={t.label} role="img" aria-label={t.label} width="16" height="16" viewBox="0 0 16 16">
            {t.art}
          </svg>
        ))}
        <time className="ml-1 pt-[2px]">09:19</time>
      </div>
    </div>
  );
}

export default function App() {
  return (
    <div className="flex h-screen flex-col overflow-hidden bg-[#d4d0c8] font-['DejaVu_Sans_Condensed','DejaVu_Sans',sans-serif] text-black">
      <TitleBar />
      <NavBar />
      <MenuBar />
      <FavoritesBar />
      <TabRow />
      <FormulaBar />
      <main className="flex min-h-0 flex-1 flex-col">
        <div className="flex min-h-0 flex-1 border-t-2 border-l-2 border-[#606060]">
          <Sheet />
          <VerticalScroll />
        </div>
        <SheetTabs />
      </main>
      <StatusBar />
      <TaskBar />
    </div>
  );
}
